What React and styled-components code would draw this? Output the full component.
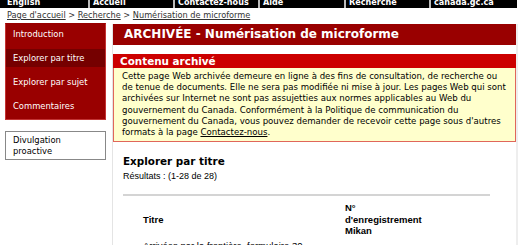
import React from "react";
import styled, { createGlobalStyle } from "styled-components";

const GlobalStyle = createGlobalStyle`
    body {
        margin: 0;
        background: #fff;
        font-family: "DejaVu Sans", Verdana, sans-serif;
        font-size: 8.4px;
        color: #000;
    }
`;

const TopBar = styled.div`
    display: flex;
    width: 517px;
    height: 8px;
    overflow: hidden;
    background: #000;
`;

const TopCell = styled.a`
    width: ${props => props.w}px;
    box-sizing: border-box;
    align-self: flex-end;
    padding-left: 3px;
    border-right: 2px solid #bbb;
    color: #fff;
    font-weight: bold;
    font-size: 8.1px;
    line-height: 12px;
    text-decoration: none;
    white-space: nowrap;
    overflow: hidden;
    &:first-child { padding-left: 7px; }
    &:last-child { border-right: none; }
`;

const Crumbs = styled.div`
    height: 14px;
    padding: 1px 0 0 7px;
    font-size: 8.2px;
    line-height: 12px;
    color: #333;
    a { color: #333; }
`;

const Layout = styled.div`
    display: flex;
    align-items: flex-start;
    padding-left: 5px;
`;

const Side = styled.div`
    width: 101px;
    display: flex;
    flex-direction: column;
    gap: 11px;
`;

const Nav = styled.ul`
    list-style: none;
    margin: 0;
    padding: 1px 0 4px;
    background: #990000;
    border: 1px solid #c33333;
    border-top-color: #990000;
    display: flex;
    flex-direction: column;
    gap: 6px;
`;

const NavItem = styled.li`
    height: 18px;
    line-height: 18px;
    padding-left: 7px;
    color: #fff;
    background: ${props => (props.active ? "#750000" : "transparent")};
`;

const InfoBox = styled.div`
    border: 1px solid #888;
    padding: 3px 7px 2px;
    line-height: 11px;
`;

const Main = styled.div`
    width: 403px;
    margin: 1px 0 0 6px;
    min-height: 240px;
    border-left: 1px solid #e4e4e4;
    border-right: 2px solid #eee;
`;

const Title = styled.h1`
    margin: 0;
    height: 21px;
    line-height: 21px;
    padding-left: 11px;
    background: #990000;
    color: #fff;
    font-size: 12px;
    font-weight: bold;
`;

const Notice = styled.div`
    margin-top: 9px;
`;

const NoticeHead = styled.h2`
    margin: 0;
    height: 14px;
    line-height: 14px;
    padding-left: 7px;
    background: #cc0000;
    color: #fff;
    font-size: 10.4px;
    font-weight: bold;
`;

const NoticeBody = styled.p`
    margin: 0;
    padding: 3px 8px 3px 8px;
    font-size: 8.6px;
    line-height: 11.2px;
    background: #ffffcc;
    border: 1px solid #e0665a;
    border-top: none;
    a { color: #000; }
`;

const Section = styled.div`
    padding: 12px 26px 0 10px;
`;

const SectionTitle = styled.h2`
    margin: 0;
    font-size: 10.4px;
    line-height: 14px;
    font-weight: bold;
`;

const Results = styled.div`
    margin-top: 3px;
    font-family: "Liberation Sans", Arial, sans-serif;
    font-size: 9px;
    line-height: 11px;
`;

const Rule = styled.hr`
    margin: 12px 0 0;
    border: none;
    height: 2px;
    background: #d4d4d4;
`;

const Table = styled.table`
    margin-top: 6px;
    border-collapse: collapse;
    font-family: "Liberation Sans", Arial, sans-serif;
    font-size: 9.5px;
    th, td {
        padding: 0 0 0 20px;
        text-align: left;
        vertical-align: middle;
        line-height: 11.5px;
    }
    th { font-weight: bold; }
    td { padding-top: 3px; }
`;

const App = () => {
    const links = [
        ["English", 90],
        ["Accueil", 85],
        ["Contactez-nous", 85],
        ["Aide", 86],
        ["Recherche", 85],
        ["canada.gc.ca", 86],
    ];

    return (
        <>
            <GlobalStyle />
            <TopBar>
                {links.map(([label, w]) => (
                    <TopCell key={label} w={w} href="#">{label}</TopCell>
                ))}
            </TopBar>
            <Crumbs>
                <a href="#">Page d'accueil</a> &gt; <a href="#">Recherche</a> &gt; <a href="#">Numérisation de microforme</a>
            </Crumbs>
            <Layout>
                <Side>
                    <Nav>
                        <NavItem>Introduction</NavItem>
                        <NavItem active>Explorer par titre</NavItem>
                        <NavItem>Explorer par sujet</NavItem>
                        <NavItem>Commentaires</NavItem>
                    </Nav>
                    <InfoBox>Divulgation proactive</InfoBox>
                </Side>
                <Main>
                    <Title>ARCHIVÉE - Numérisation de microforme</Title>
                    <Notice>
                        <NoticeHead>Contenu archivé</NoticeHead>
                        <NoticeBody>
                            Cette page Web archivée demeure en ligne à des fins de consultation, de recherche ou de tenue de documents. Elle ne sera pas modifiée ni mise à jour. Les pages Web qui sont archivées sur Internet ne sont pas assujetties aux normes applicables au Web du gouvernement du Canada. Conformément à la Politique de communication du gouvernement du Canada, vous pouvez demander de recevoir cette page sous d'autres formats à la page <a href="#">Contactez-nous</a>.
                        </NoticeBody>
                    </Notice>
                    <Section>
                        <SectionTitle>Explorer par titre</SectionTitle>
                        <Results>Résultats : (1-28 de 28)</Results>
                        <Rule />
                        <Table>
                            <thead>
                                <tr>
                                    <th style={{ width: 182 }}>Titre</th>
                                    <th>N°<br />d'enregistrement<br />Mikan</th>
                                </tr>
                            </thead>
                            <tbody>
                                <tr>
                                    <td>Arrivées par la frontière, formulaire 30</td>
                                    <td></td>
                                </tr>
                            </tbody>
                        </Table>
                    </Section>
                </Main>
            </Layout>
        </>
    );
};

export default App;
